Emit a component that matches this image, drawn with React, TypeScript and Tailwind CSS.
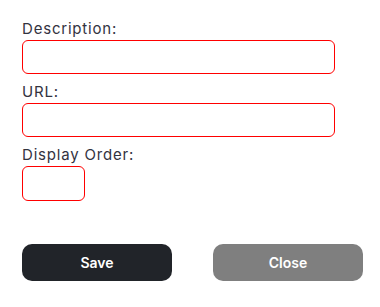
export default function App() {
  const label = "text-[15px] leading-[23px] tracking-[0.8px] text-[#33333f]";
  return (
    <div className="w-[380px] h-[307px] bg-white pl-[22px] pt-[17px]" style={{ fontFamily: "Inter, 'Liberation Sans', sans-serif" }}>
      <form className="w-[341px] flex flex-col">
        <label className={label}>Description:</label>
        <input type="text" className="w-[313px] h-[34px] mb-[6px] rounded-[6px] border border-[#ff0000] outline-none px-2" />
        <label className={label}>URL:</label>
        <input type="text" className="w-[313px] h-[34px] mb-[6px] rounded-[6px] border border-[#ff0000] outline-none px-2" />
        <label className={label}>Display Order:</label>
        <input type="text" className="w-[63px] h-[35px] rounded-[6px] border border-[#ff0000] outline-none px-2" />
        <div className="mt-[43px] flex justify-between">
          <button type="button" className="w-[150px] h-[37px] rounded-[10px] bg-[#212429] text-white text-[14px] font-semibold">
            Save
          </button>
          <button type="button" className="w-[150px] h-[37px] rounded-[10px] bg-[#7f7f7f] text-white text-[14px] font-semibold">
            Close
          </button>
        </div>
      </form>
    </div>
  );
}
